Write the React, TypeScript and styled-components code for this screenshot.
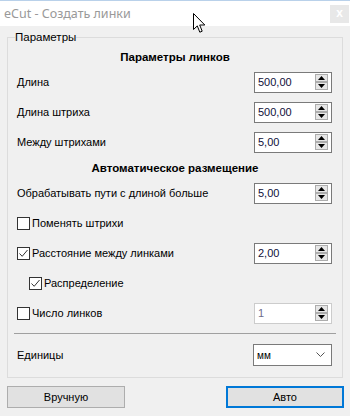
import React from "react";
import styled, { createGlobalStyle } from "styled-components";

const Global = createGlobalStyle`
  html, body { margin: 0; padding: 0; background: #f0f0f0; }
  body { width: 350px; height: 416px; overflow: hidden; font-family: "Liberation Sans", Arial, sans-serif; font-size: 11px; color: #000; }
`;

const Window = styled.div`
  position: relative;
  width: 350px;
  height: 416px;
  background: #f0f0f0;
  display: flex;
  flex-direction: column;
`;

const TitleBar = styled.div`
  height: 26px;
  box-sizing: border-box;
  background: #fff;
  border-top: 1px solid #b9d1ea;
  display: flex;
  align-items: center;
  justify-content: space-between;
  padding: 0 1px 0 4px;
`;

const Title = styled.span`
  color: #999;
  font-family: "Noto Sans", "Open Sans", sans-serif;
  font-size: 12.5px;
  line-height: 16px;
`;

const CloseBtn = styled.div`
  width: 19px;
  height: 18px;
  margin-top: 1px;
  background: #e8e8e8;
  color: #fff;
  font-size: 12px;
  line-height: 17px;
  text-align: center;
  font-weight: bold;
`;

const Body = styled.div`
  flex: 1;
  display: flex;
  flex-direction: column;
  padding: 4px 7px 0 7px;
`;

const Group = styled.fieldset`
  margin: 0;
  width: 336px;
  box-sizing: border-box;
  padding: 1px 0 0 0;
  border: 1px solid #dcdcdc;
  display: flex;
  flex-direction: column;
`;

const Legend = styled.legend`
  margin-left: 7px;
  padding: 0;
  font-size: 11.5px;
  line-height: 15px;
`;

const Heading = styled.div<{ $h: number }>`
  height: ${(p) => p.$h}px;
  display: flex;
  align-items: center;
  justify-content: center;
  font-weight: bold;
  font-size: 11.5px;
`;

const Row = styled.div<{ $indent?: number }>`
  height: 30px;
  display: flex;
  align-items: center;
  justify-content: space-between;
  padding: 0 10px 0 ${(p) => 9 + (p.$indent || 0)}px;
`;

const Label = styled.span`
  font-size: 11px;
`;

const CheckLabel = styled.label`
  display: flex;
  align-items: center;
  gap: 2px;
  font-size: 11px;
`;

const Box = styled.span`
  width: 13px;
  height: 13px;
  box-sizing: border-box;
  border: 1px solid #333;
  background: #fff;
  display: flex;
  align-items: center;
  justify-content: center;
`;

const Spin = styled.div<{ $disabled?: boolean }>`
  width: 78px;
  height: 21px;
  box-sizing: border-box;
  border: 1px solid ${(p) => (p.$disabled ? "#cccccc" : "#7a7a7a")};
  background: #fff;
  display: flex;
  align-items: center;
  justify-content: space-between;
  padding: 0 3px 0 3px;
  color: ${(p) => (p.$disabled ? "#6d6d8a" : "#10103a")};
  font-size: 11px;
`;

const Combo = styled.div`
  width: 79px;
  height: 22px;
  box-sizing: border-box;
  border: 1px solid #7a7a7a;
  background: #fff;
  display: flex;
  align-items: center;
  justify-content: space-between;
  padding: 0 6px 0 3px;
  font-size: 10px;
  color: #000;
`;

const Separator = styled.div`
  height: 1px;
  background: #a0a0a0;
  margin: 5px 6px 0 6px;
`;

const ComboRow = styled(Row)`
  height: 32px;
  margin-top: 5px;
  margin-bottom: 6px;
`;

const Buttons = styled.div`
  display: flex;
  justify-content: space-between;
  margin-top: 8px;
  width: 336px;
`;

const Button = styled.div<{ $primary?: boolean }>`
  width: 118px;
  height: 22px;
  box-sizing: border-box;
  background: #e1e1e1;
  border: ${(p) => (p.$primary ? "2px solid #0078d7" : "1px solid #adadad")};
  display: flex;
  align-items: center;
  justify-content: center;
  font-size: 11px;
  margin-right: ${(p) => (p.$primary ? "-1px" : "0")};
`;

const Cursor = styled.svg`
  position: absolute;
  left: 193px;
  top: 13px;
`;

const SpinArrows = () => (
  <svg width="13" height="16" viewBox="0 0 13 16">
    <rect x="0.5" y="0.5" width="12" height="7" fill="#e6e6e6" stroke="#adadad" />
    <rect x="0.5" y="8.5" width="12" height="7" fill="#e6e6e6" stroke="#adadad" />
    <path d="M6.5 2 L10 6 L3 6 Z" fill="#000" />
    <path d="M3 10 L10 10 L6.5 14 Z" fill="#000" />
  </svg>
);

const Check = ({ on }: { on?: boolean }) => (
  <Box>
    {on && (
      <svg width="11" height="11" viewBox="0 0 11 11">
        <path d="M1.5 5.5 L4.2 8.3 L9.5 2" fill="none" stroke="#333" strokeWidth="1" />
      </svg>
    )}
  </Box>
);

const SpinBox = ({ value, disabled }: { value: string; disabled?: boolean }) => (
  <Spin $disabled={disabled}>
    <span>{value}</span>
    <SpinArrows />
  </Spin>
);

export default function App() {
  return (
    <Window>
      <Global />
      <TitleBar>
        <Title>eCut - Создать линки</Title>
        <CloseBtn>x</CloseBtn>
      </TitleBar>
      <Cursor width="13" height="21" viewBox="0 0 13 21">
        <path d="M0.5 0.5 L0.5 16.5 L4.3 12.9 L6.8 19.2 L9.2 18.2 L6.7 12 L11.8 12 Z" fill="#fff" stroke="#000" strokeWidth="1" strokeLinejoin="round" />
      </Cursor>
      <Body>
        <Group>
          <Legend>Параметры</Legend>
          <Heading $h={21}>Параметры линков</Heading>
          <Row>
            <Label>Длина</Label>
            <SpinBox value="500,00" />
          </Row>
          <Row>
            <Label>Длина штриха</Label>
            <SpinBox value="500,00" />
          </Row>
          <Row>
            <Label>Между штрихами</Label>
            <SpinBox value="5,00" />
          </Row>
          <Heading $h={21}>Автоматическое размещение</Heading>
          <Row>
            <Label>Обрабатывать пути с длиной больше</Label>
            <SpinBox value="5,00" />
          </Row>
          <Row>
            <CheckLabel>
              <Check />
              Поменять штрихи
            </CheckLabel>
          </Row>
          <Row>
            <CheckLabel>
              <Check on />
              Расстояние между линками
            </CheckLabel>
            <SpinBox value="2,00" />
          </Row>
          <Row $indent={12}>
            <CheckLabel>
              <Check on />
              Распределение
            </CheckLabel>
          </Row>
          <Row>
            <CheckLabel>
              <Check />
              Число линков
            </CheckLabel>
            <SpinBox value="1" disabled />
          </Row>
          <Separator />
          <ComboRow>
            <Label>Единицы</Label>
            <Combo>
              <span>мм</span>
              <svg width="9" height="6" viewBox="0 0 9 6">
                <path d="M0.5 0.5 L4.5 4.5 L8.5 0.5" fill="none" stroke="#555" strokeWidth="1" />
              </svg>
            </Combo>
          </ComboRow>
        </Group>
        <Buttons>
          <Button>Вручную</Button>
          <Button $primary>Авто</Button>
        </Buttons>
      </Body>
    </Window>
  );
}
